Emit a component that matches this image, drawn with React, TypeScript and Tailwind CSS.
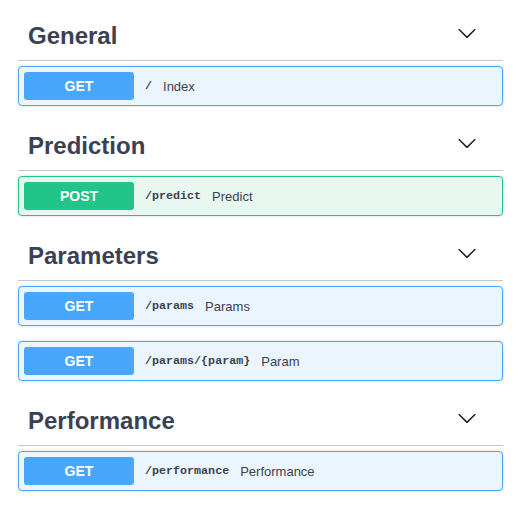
const sections = [
    { tag: "General", ops: [{ method: "GET", path: "/", summary: "Index" }] },
    { tag: "Prediction", ops: [{ method: "POST", path: "/predict", summary: "Predict" }] },
    {
        tag: "Parameters",
        ops: [
            { method: "GET", path: "/params", summary: "Params" },
            { method: "GET", path: "/params/{param}", summary: "Param" },
        ],
    },
    { tag: "Performance", ops: [{ method: "GET", path: "/performance", summary: "Performance" }] },
];

function Arrow() {
    return (
        <svg width="20" height="20" viewBox="0 0 20 20" className="fill-[#1b1b1b] -mt-[5px]">
            <path d="M17.418 6.109c.272-.268.709-.268.979 0s.271.701 0 .969l-7.908 7.83c-.27.268-.707.268-.979 0l-7.908-7.83c-.27-.268-.27-.701 0-.969.271-.268.709-.268.979 0L10 13.25l7.418-7.141z" />
        </svg>
    );
}

function Operation({ method, path, summary }: { method: string; path: string; summary: string }) {
    const post = method === "POST";
    return (
        <div
            className={
                post
                    ? "flex items-center p-[5px] border border-[#22c489] bg-[#e8f8f1] rounded-[4px] shadow-[0_0_3px_rgba(0,0,0,0.19)] mb-[15px]"
                    : "flex items-center p-[5px] border border-[#49a6fd] bg-[#ebf5fe] rounded-[4px] shadow-[0_0_3px_rgba(0,0,0,0.19)] mb-[15px]"
            }
        >
            <div
                className={
                    post
                        ? "w-[110px] h-[28px] flex items-center justify-center rounded-[3px] bg-[#22c489] text-white font-bold text-[14px]"
                        : "w-[110px] h-[28px] flex items-center justify-center rounded-[3px] bg-[#49a6fd] text-white font-bold text-[14px]"
                }
            >
                {method}
            </div>
            <span className="pl-[11px] pr-[11px] mt-[2px] font-['Liberation_Mono',monospace] font-bold text-[11.7px] text-[#3b4151]">
                {path}
            </span>
            <span className="mt-[2px] text-[13px] text-[#3b4151]">{summary}</span>
        </div>
    );
}

export default function App() {
    return (
        <div className="bg-white min-h-screen px-[18px] pt-[11px] font-['Liberation_Sans',Arial,sans-serif]">
            {sections.map((s) => (
                <section key={s.tag}>
                    <div className="h-[50px] flex items-center justify-between border-b border-[#c4c6cb] pl-[10px] pr-[26px] mb-[5px]">
                        <h3 className="text-[24px] font-bold text-[#3b4151]">{s.tag}</h3>
                        <Arrow />
                    </div>
                    {s.ops.map((op) => (
                        <Operation key={op.path} {...op} />
                    ))}
                </section>
            ))}
        </div>
    );
}
